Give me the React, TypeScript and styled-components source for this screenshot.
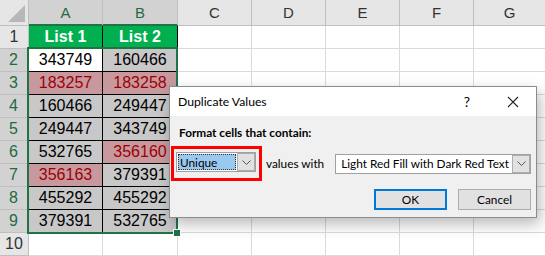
import styled, { createGlobalStyle } from "styled-components";

const Global = createGlobalStyle`
  html, body {
    margin: 0;
    padding: 0;
    background: #fff;
    overflow: hidden;
  }
`;

const Screen = styled.div`
  position: relative;
  width: 545px;
  height: 256px;
  overflow: hidden;
  font-family: "Liberation Sans", Arial, sans-serif;
`;

const Sheet = styled.div`
  display: grid;
  grid-template-columns: 29px 74px 75px 74px 74px 74px 74px 72px;
  grid-template-rows: 26px repeat(10, 23px);
`;

const Corner = styled.div`
  position: relative;
  background: #e6e6e6;
  border-right: 1px solid #bfbfbf;
  border-bottom: 1px solid #bfbfbf;
  box-sizing: border-box;

  &::after {
    content: "";
    position: absolute;
    right: 3px;
    bottom: 3px;
    border-left: 17px solid transparent;
    border-bottom: 17px solid #b7b7b7;
  }
`;

const ColHead = styled.div<{ $sel?: boolean }>`
  display: flex;
  align-items: center;
  justify-content: center;
  box-sizing: border-box;
  background: ${(p) => (p.$sel ? "#d2d2d2" : "#e6e6e6")};
  color: ${(p) => (p.$sel ? "#1e6a44" : "#333")};
  border-right: 1px solid #bfbfbf;
  border-bottom: ${(p) => (p.$sel ? "2px solid #217346" : "1px solid #bfbfbf")};
  font-size: 15px;
`;

const RowHead = styled.div<{ $sel?: boolean }>`
  display: flex;
  align-items: center;
  justify-content: center;
  box-sizing: border-box;
  background: ${(p) => (p.$sel ? "#d2d2d2" : "#e6e6e6")};
  color: ${(p) => (p.$sel ? "#1e6a44" : "#333")};
  border-right: ${(p) => (p.$sel ? "2px solid #217346" : "1px solid #bfbfbf")};
  border-bottom: 1px solid #bfbfbf;
  font-size: 16px;
`;

const Cell = styled.div<{ $tone?: "plain" | "head" | "white" | "gray" | "red" }>`
  display: flex;
  align-items: center;
  justify-content: center;
  box-sizing: border-box;
  font-size: 16px;
  border-right: 1px solid
    ${(p) => (p.$tone && p.$tone !== "plain" ? "#000" : "#dadada")};
  border-bottom: 1px solid
    ${(p) => (p.$tone && p.$tone !== "plain" ? "#000" : "#dadada")};
  background: ${(p) =>
    p.$tone === "head"
      ? "#00b050"
      : p.$tone === "gray"
      ? "#c8c8c8"
      : p.$tone === "red"
      ? "#c7999e"
      : "#fff"};
  color: ${(p) =>
    p.$tone === "head" ? "#fff" : p.$tone === "red" ? "#9c0006" : "#000"};
  font-weight: ${(p) => (p.$tone === "head" ? 700 : 400)};
`;

const Selection = styled.div`
  position: absolute;
  left: 27px;
  top: 47px;
  width: 151px;
  height: 187px;
  border: 2px solid #217346;
  box-sizing: border-box;
  pointer-events: none;

  &::after {
    content: "";
    position: absolute;
    right: -5px;
    bottom: -5px;
    width: 6px;
    height: 6px;
    background: #217346;
    border: 1px solid #fff;
  }
`;

const Dialog = styled.div`
  position: absolute;
  left: 169px;
  top: 86px;
  width: 368px;
  height: 132px;
  box-sizing: border-box;
  background: #f0f0f0;
  border: 1px solid #8c8c8c;
  box-shadow: 3px 6px 14px rgba(0, 0, 0, 0.28);
  font-family: Lato, "Noto Sans", sans-serif;
  font-size: 11.8px;
  color: #000;
  display: flex;
  flex-direction: column;
`;

const TitleBar = styled.div`
  height: 29px;
  background: #fff;
  display: flex;
  align-items: center;
  padding-left: 8px;
  font-size: 12.2px;
`;

const Title = styled.div`
  flex: 1;
`;

const TitleBtn = styled.div`
  width: 46px;
  display: flex;
  align-items: center;
  justify-content: center;
  font-size: 14px;
`;

const Body = styled.div`
  padding: 9px 5px 0 8px;
  display: flex;
  flex-direction: column;
`;

const Label = styled.div`
  font-weight: 700;
  line-height: 15px;
  margin-left: 1px;
`;

const Line = styled.div`
  display: flex;
  align-items: center;
  margin-top: 6px;
  margin-left: -7px;
`;

const Highlight = styled.div`
  border: 3px solid #ff0000;
  padding: 3px 3px 6px 2px;
  display: flex;
`;

const Select = styled.div<{ $w: number }>`
  width: ${(p) => p.$w}px;
  height: 20px;
  box-sizing: border-box;
  border: 1px solid #a0a0a0;
  background: #fff;
  display: flex;
  align-items: center;
  padding: 1px 0 1px 1px;
`;

const SelText = styled.div<{ $focus?: boolean }>`
  flex: 1;
  height: 100%;
  display: flex;
  align-items: center;
  padding-left: ${(p) => (p.$focus ? "2px" : "4px")};
  background: ${(p) => (p.$focus ? "#99c9ef" : "transparent")};
  outline: ${(p) => (p.$focus ? "1px dotted #333" : "none")};
  outline-offset: -1px;
  margin-right: 1px;
  white-space: nowrap;
`;

const Arrow = styled.div`
  width: 18px;
  height: 18px;
  box-sizing: border-box;
  background: #e1e1e1;
  border: 1px solid #adadad;
  display: flex;
  align-items: center;
  justify-content: center;
`;

const ValuesWith = styled.div`
  margin: 0 11px 0 4px;
  white-space: nowrap;
`;

const Buttons = styled.div`
  display: flex;
  justify-content: flex-end;
  gap: 11px;
  margin-top: 8px;
`;

const Btn = styled.div<{ $primary?: boolean }>`
  width: 73px;
  height: 21px;
  box-sizing: border-box;
  background: #e1e1e1;
  border: ${(p) => (p.$primary ? "2px solid #0078d7" : "1px solid #adadad")};
  display: flex;
  align-items: center;
  justify-content: center;
`;

const Chevron = () => (
  <svg width="9" height="5" viewBox="0 0 9 5">
    <path d="M0.5 0.5 L4.5 4.5 L8.5 0.5" fill="none" stroke="#555" strokeWidth="1" />
  </svg>
);

const Close = () => (
  <svg width="12" height="12" viewBox="0 0 12 12">
    <path d="M1 1 L11 11 M11 1 L1 11" stroke="#222" strokeWidth="1.1" />
  </svg>
);

const cols = ["A", "B", "C", "D", "E", "F", "G"];

type Tone = "white" | "gray" | "red";
const data: [string, Tone, string, Tone][] = [
  ["343749", "white", "160466", "gray"],
  ["183257", "red", "183258", "red"],
  ["160466", "gray", "249447", "gray"],
  ["249447", "gray", "343749", "gray"],
  ["532765", "gray", "356160", "red"],
  ["356163", "red", "379391", "gray"],
  ["455292", "gray", "455292", "gray"],
  ["379391", "gray", "532765", "gray"],
];

const Blanks = ({ n }: { n: number }) => (
  <>
    {Array.from({ length: n }).map((_, i) => (
      <Cell key={i} $tone="plain" />
    ))}
  </>
);

export default function App() {
  return (
    <Screen>
      <Global />
      <Sheet>
        <Corner />
        {cols.map((c) => (
          <ColHead key={c} $sel={c === "A" || c === "B"}>
            {c}
          </ColHead>
        ))}

        <RowHead>1</RowHead>
        <Cell $tone="head">List 1</Cell>
        <Cell $tone="head">List 2</Cell>
        <Blanks n={5} />

        {data.map((r, i) => [
          <RowHead key={"h" + i} $sel>
            {i + 2}
          </RowHead>,
          <Cell key={"a" + i} $tone={r[1]}>
            {r[0]}
          </Cell>,
          <Cell key={"b" + i} $tone={r[3]}>
            {r[2]}
          </Cell>,
          <Blanks key={"x" + i} n={5} />,
        ])}

        <RowHead>10</RowHead>
        <Blanks n={7} />
      </Sheet>

      <Selection />

      <Dialog>
        <TitleBar>
          <Title>Duplicate Values</Title>
          <TitleBtn>?</TitleBtn>
          <TitleBtn>
            <Close />
          </TitleBtn>
        </TitleBar>
        <Body>
          <Label>Format cells that contain:</Label>
          <Line>
            <Highlight>
              <Select $w={80}>
                <SelText $focus>Unique</SelText>
                <Arrow>
                  <Chevron />
                </Arrow>
              </Select>
            </Highlight>
            <ValuesWith>values with</ValuesWith>
            <Select $w={197}>
              <SelText>Light Red Fill with Dark Red Text</SelText>
              <Arrow>
                <Chevron />
              </Arrow>
            </Select>
          </Line>
          <Buttons>
            <Btn $primary>OK</Btn>
            <Btn>Cancel</Btn>
          </Buttons>
        </Body>
      </Dialog>
    </Screen>
  );
}
